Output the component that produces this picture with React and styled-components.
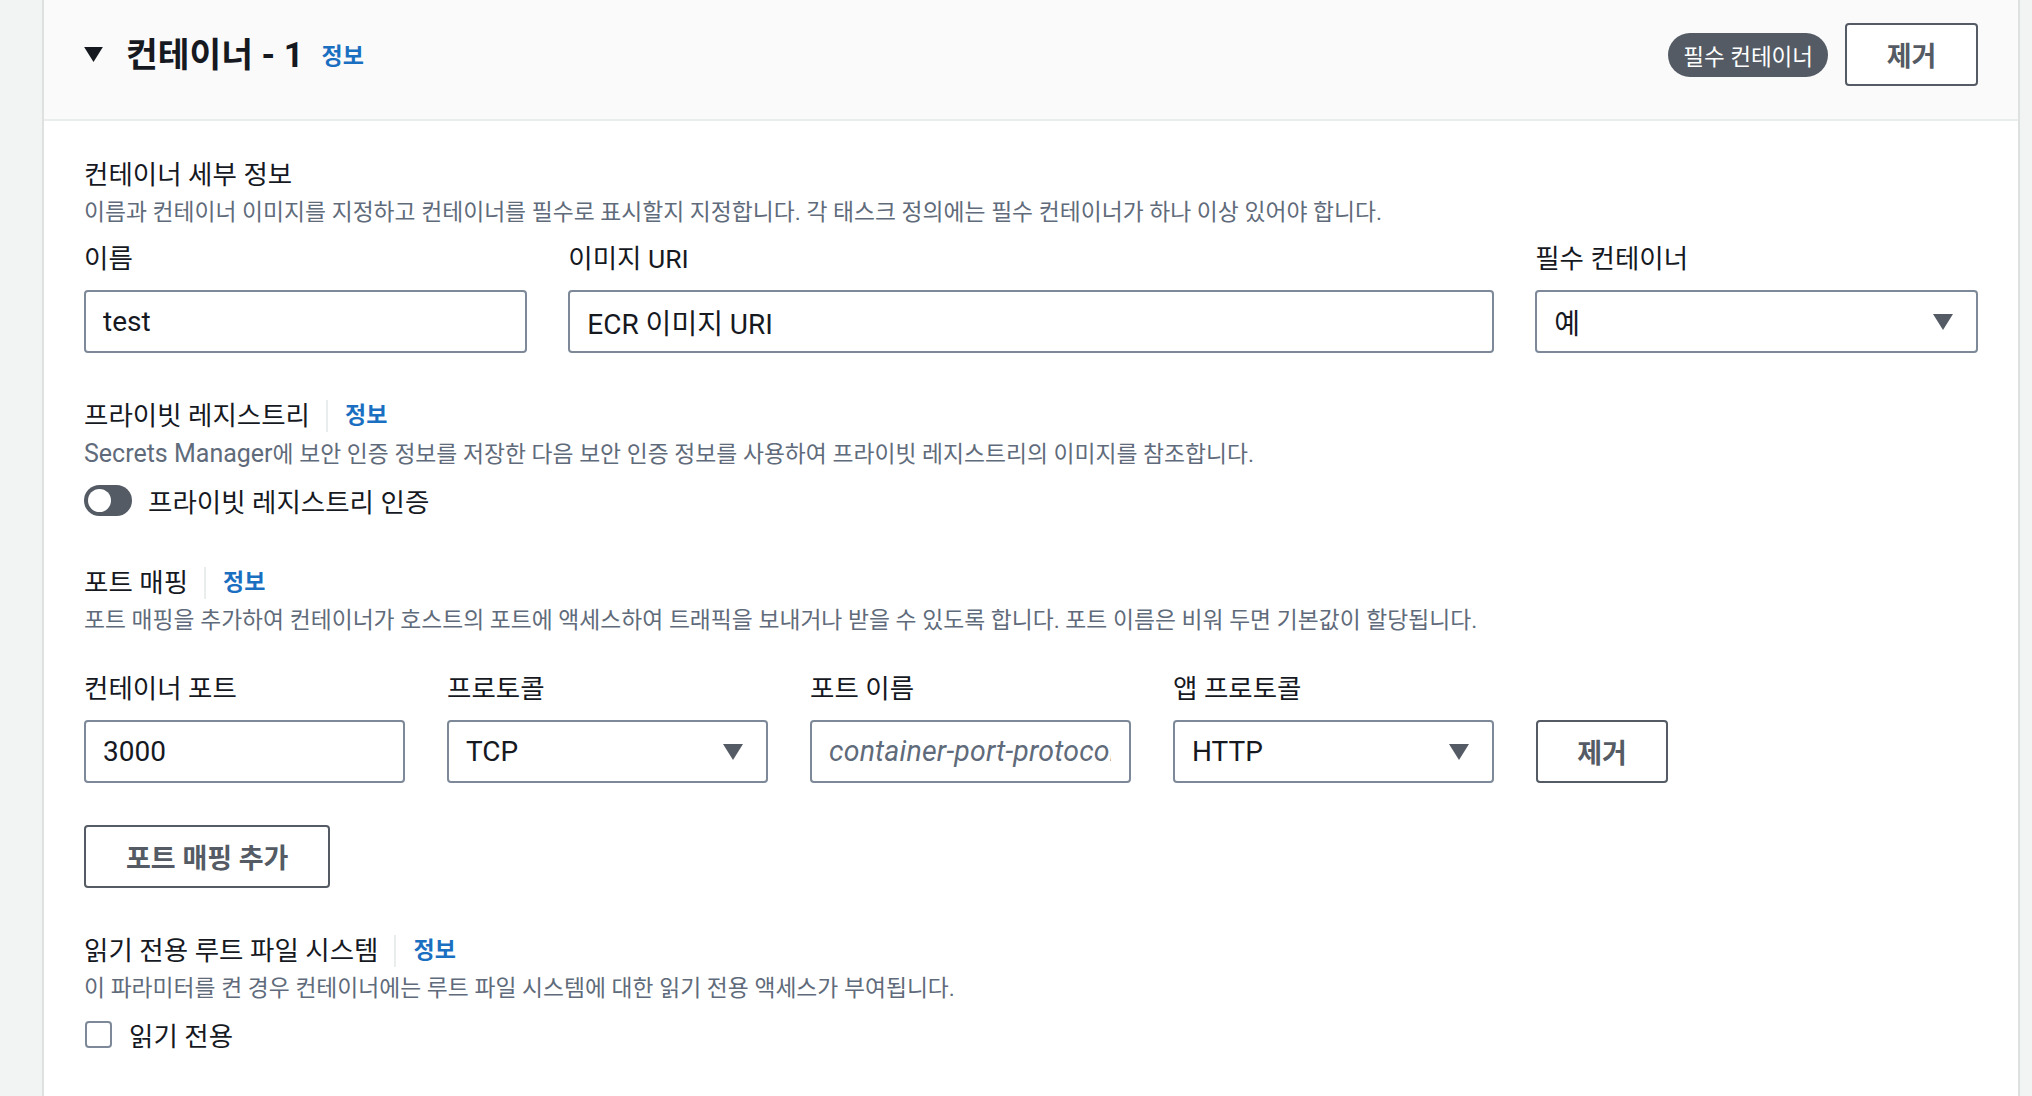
import styled, { createGlobalStyle } from 'styled-components';

const GlobalStyle = createGlobalStyle`
  body {
    margin: 0;
    background: #f2f3f3;
    font-family: Roboto, "Noto Sans CJK KR", sans-serif;
    color: #16191f;
  }
`;

const Page = styled.div`
  display: flex;
  min-height: 100vh;
  padding: 0 12px 0 42px;
  background: #f2f3f3;
`;
const Card = styled.section`
  flex: 1;
  background: #ffffff;
  border-left: 2px solid #dde1e1;
  border-right: 2px solid #dde1e1;
`;
const Header = styled.header`
  display: flex;
  align-items: center;
  justify-content: space-between;
  padding: 23px 40px 33px 40px;
  background: #fafafa;
  border-bottom: 2px solid #eaeded;
`;
const TitleGroup = styled.div`
  display: flex;
  align-items: center;
  height: 63px;
`;
const Caret = styled.svg`
  width: 19px;
  height: 15px;
  margin-right: 23px;
`;
const Title = styled.h2`
  margin: 0 18px 0 0;
  font-size: 34.5px;
  font-weight: 700;
  line-height: 40px;
  color: #16191f;
`;
const InfoLink = styled.a`
  font-size: 23px;
  font-weight: 700;
  color: #1a6fc1;
  text-decoration: none;
  line-height: 36px;
  margin-top: ${(p) => (p.$header ? '4px' : '0')};
`;
const Actions = styled.div`
  display: flex;
  align-items: center;
  gap: 17px;
`;
const Badge = styled.span`
  display: inline-flex;
  align-items: center;
  height: 44px;
  padding: 0 15px;
  border-radius: 22px;
  background: #545b64;
  color: #ffffff;
  font-size: 22.5px;
`;
const Button = styled.button`
  box-sizing: border-box;
  height: 63px;
  padding: 0 ${(p) => p.$pad ?? 40}px;
  width: ${(p) => (p.$width ? `${p.$width}px` : 'auto')};
  white-space: nowrap;
  background: #ffffff;
  border: 2px solid #545b64;
  border-radius: 4px;
  font-family: inherit;
  font-size: 27px;
  font-weight: 700;
  color: #545b64;
  cursor: pointer;
`;

const Body = styled.div`
  padding: 36px 40px 40px 40px;
`;
const Section = styled.div`
  margin-top: ${(p) => p.$mt || 0}px;
`;
const HeadingRow = styled.div`
  display: flex;
  align-items: center;
  height: 36px;
`;
const Heading = styled.span`
  font-size: 26.5px;
  line-height: 36px;
  color: #16191f;
`;
const Divider = styled.span`
  width: 2px;
  height: 32px;
  background: #eaeded;
  margin: 0 17px 0 16px;
`;
const Desc = styled.p`
  margin: 4px 0 0 0;
  font-size: 22.8px;
  line-height: 32px;
  color: #5f6b7a;
`;
const Latin = styled.span`
  font-size: 25px;
`;
const FieldGrid = styled.div`
  display: grid;
  grid-template-columns: ${(p) => p.$cols};
  column-gap: ${(p) => p.$gap || 42}px;
  align-items: end;
  margin-top: ${(p) => p.$mt || 12}px;
`;
const Field = styled.div`
  display: flex;
  flex-direction: column;
  min-width: 0;
`;
const Label = styled.label`
  font-size: 26.5px;
  line-height: 36px;
  margin-bottom: 13px;
  color: #16191f;
`;
const Input = styled.input`
  box-sizing: border-box;
  width: 100%;
  height: 63px;
  padding: 0 18px 0 17px;
  border: 2px solid #7d8998;
  border-radius: 4px;
  font-family: inherit;
  font-size: 28px;
  color: #16191f;
  outline: none;
  &::placeholder {
    color: #5f6b7a;
    font-style: italic;
    font-size: 28.5px;
    letter-spacing: 0.2px;
    opacity: 1;
  }
`;
const Select = styled.div`
  box-sizing: border-box;
  display: flex;
  align-items: center;
  justify-content: space-between;
  height: 63px;
  padding: 0 23px 0 17px;
  border: 2px solid #7d8998;
  border-radius: 4px;
  font-size: 28px;
  color: #16191f;
`;
const SelectCaret = styled.svg`
  width: 20px;
  height: 16px;
`;
const CheckRow = styled.div`
  display: flex;
  align-items: center;
  height: 36px;
  margin-top: 11px;
`;
const Toggle = styled.span`
  position: relative;
  width: 48px;
  height: 31px;
  border-radius: 16px;
  background: #545b64;
  margin-right: 16px;
  &::after {
    content: '';
    position: absolute;
    left: 4px;
    top: 4px;
    width: 23px;
    height: 23px;
    border-radius: 50%;
    background: #ffffff;
  }
`;
const Checkbox = styled.span`
  box-sizing: border-box;
  width: 27px;
  height: 27px;
  border: 2px solid #7d8998;
  border-radius: 4px;
  margin: 0 17px 0 1px;
`;
const CheckLabel = styled.span`
  font-size: 26.5px;
  color: #16191f;
`;
const AddRow = styled.div`
  margin-top: 42px;
`;

const Triangle = ({ as: Comp = SelectCaret, color = '#545b64' }) => (
  <Comp viewBox="0 0 20 16">
    <polygon points="0,0 20,0 10,16" fill={color} />
  </Comp>
);

const SectionHeading = ({ children, info }) => (
  <HeadingRow>
    <Heading>{children}</Heading>
    {info && (
      <>
        <Divider />
        <InfoLink href="#">정보</InfoLink>
      </>
    )}
  </HeadingRow>
);

const SelectBox = ({ value }) => (
  <Select>
    <span>{value}</span>
    <Triangle />
  </Select>
);

const portFields = [
  { label: '컨테이너 포트', type: 'input', value: '3000' },
  { label: '프로토콜', type: 'select', value: 'TCP' },
  { label: '포트 이름', type: 'input', placeholder: 'container-port-protocol' },
  { label: '앱 프로토콜', type: 'select', value: 'HTTP' },
];

export default function App() {
  return (
    <>
      <GlobalStyle />
      <Page>
        <Card>
          <Header>
            <TitleGroup>
              <Triangle as={Caret} color="#16191f" />
              <Title>컨테이너 - 1</Title>
              <InfoLink href="#" $header>정보</InfoLink>
            </TitleGroup>
            <Actions>
              <Badge>필수 컨테이너</Badge>
              <Button $pad={0} $width={133}>제거</Button>
            </Actions>
          </Header>

          <Body>
            <Section>
              <SectionHeading>컨테이너 세부 정보</SectionHeading>
              <Desc>
                이름과 컨테이너 이미지를 지정하고 컨테이너를 필수로 표시할지 지정합니다. 각 태스크 정의에는 필수 컨테이너가 하나 이상 있어야 합니다.
              </Desc>
              <FieldGrid $cols="1fr 2.09fr 1fr" $gap={41.5}>
                <Field>
                  <Label>이름</Label>
                  <Input defaultValue="test" />
                </Field>
                <Field>
                  <Label>이미지 URI</Label>
                  <Input defaultValue="ECR 이미지 URI" />
                </Field>
                <Field>
                  <Label>필수 컨테이너</Label>
                  <SelectBox value="예" />
                </Field>
              </FieldGrid>
            </Section>

            <Section $mt={45}>
              <SectionHeading info>프라이빗 레지스트리</SectionHeading>
              <Desc>
                <Latin>Secrets Manager</Latin>에 보안 인증 정보를 저장한 다음 보안 인증 정보를 사용하여 프라이빗 레지스트리의 이미지를 참조합니다.
              </Desc>
              <CheckRow>
                <Toggle />
                <CheckLabel>프라이빗 레지스트리 인증</CheckLabel>
              </CheckRow>
            </Section>

            <Section $mt={47}>
              <SectionHeading info>포트 매핑</SectionHeading>
              <Desc>
                포트 매핑을 추가하여 컨테이너가 호스트의 포트에 액세스하여 트래픽을 보내거나 받을 수 있도록 합니다. 포트 이름은 비워 두면 기본값이 할당됩니다.
              </Desc>
              <FieldGrid $cols="repeat(4, 321px) 132px" $gap={42} $mt={34}>
                {portFields.map((f) => (
                  <Field key={f.label}>
                    <Label>{f.label}</Label>
                    {f.type === 'select' ? (
                      <SelectBox value={f.value} />
                    ) : (
                      <Input defaultValue={f.value} placeholder={f.placeholder} />
                    )}
                  </Field>
                ))}
                <Button $pad={0} $width={132}>제거</Button>
              </FieldGrid>
              <AddRow>
                <Button $pad={40}>포트 매핑 추가</Button>
              </AddRow>
            </Section>

            <Section $mt={45}>
              <SectionHeading info>읽기 전용 루트 파일 시스템</SectionHeading>
              <Desc>이 파라미터를 켠 경우 컨테이너에는 루트 파일 시스템에 대한 읽기 전용 액세스가 부여됩니다.</Desc>
              <CheckRow>
                <Checkbox />
                <CheckLabel>읽기 전용</CheckLabel>
              </CheckRow>
            </Section>
          </Body>
        </Card>
      </Page>
    </>
  );
}
